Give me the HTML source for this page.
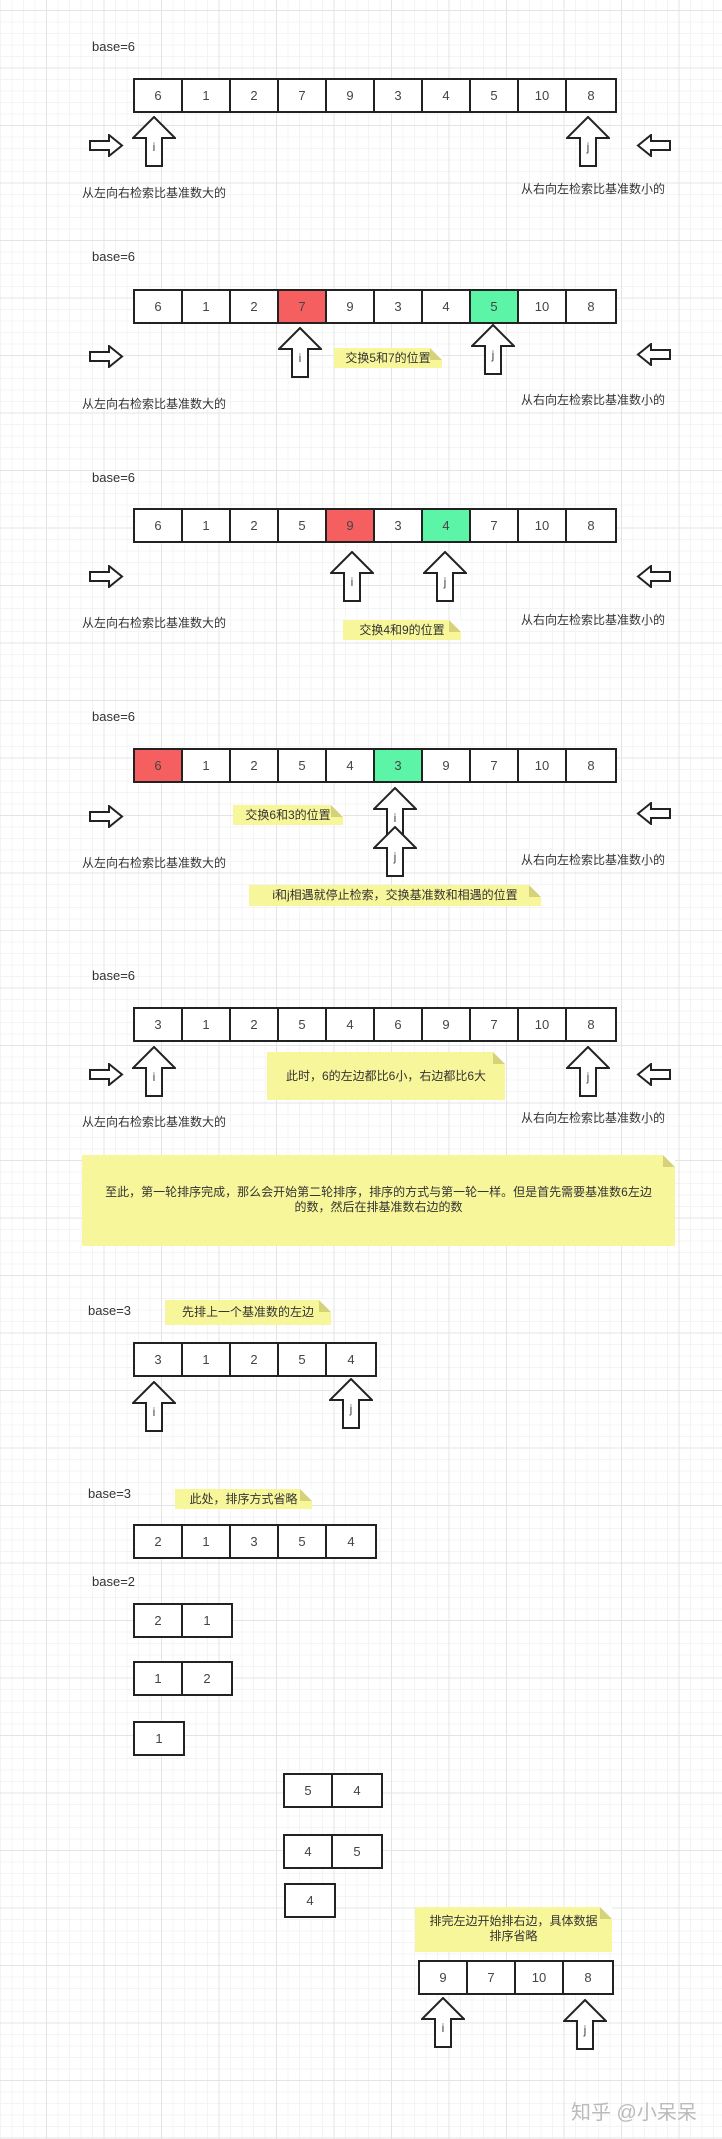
<!DOCTYPE html>
<html><head><meta charset="utf-8"><style>
*{margin:0;padding:0;box-sizing:border-box}
body{width:722px;height:2139px;position:relative;overflow:hidden;background-color:#fff;
background-image:
linear-gradient(to right,#e4e4e4 1px,transparent 1px),
linear-gradient(to bottom,#e4e4e4 1px,transparent 1px),
linear-gradient(to right,#f4f4f4 1px,transparent 1px),
linear-gradient(to bottom,#f4f4f4 1px,transparent 1px);
background-size:57.5px 57.5px,57.5px 57.5px,11.5px 11.5px,11.5px 11.5px;
background-position:46px 10px,46px 10px,46px 10px,46px 10px;
font-family:"Liberation Sans","Noto Sans CJK SC",sans-serif;color:#333}
.a{position:absolute}
.t{position:absolute;font-size:12px;color:#333;white-space:nowrap;line-height:14px}
.b{position:absolute;font-size:13px;color:#333;line-height:14px}
.arr{position:absolute;display:flex;border:2px solid #222;background:#fff}
.arr div{width:48px;height:31px;border-right:2px solid #222;text-align:center;line-height:31px;font-size:13px;color:#444}
.arr div:last-child{border-right:none}
.r{background:#f55f5f!important}.g{background:#5cf5a8!important}
.n{position:absolute;background:#f8f69a;font-size:12px;color:#333;text-align:center;line-height:15px}
.n:after{content:"";position:absolute;right:0;top:0;border-style:solid;border-width:0 12px 12px 0;border-color:#fff #fff #d5d27a #d5d27a}
.wm{position:absolute;font-size:20px;color:#bbb;left:571px;top:2096px}
</style></head><body>

<!-- S1 -->
<div class="b" style="left:92px;top:40px">base=6</div>
<div class="arr" style="left:133px;top:78px"><div>6</div><div>1</div><div>2</div><div>7</div><div>9</div><div>3</div><div>4</div><div>5</div><div>10</div><div>8</div></div>
<svg class="a" style="left:132px;top:116px" width="44" height="52"><path d="M22 1L43 22H30V50H14V22H1Z" fill="#fff" stroke="#222" stroke-width="2"/><text x="22" y="35" font-size="12" text-anchor="middle" fill="#444" font-family="Liberation Sans">i</text></svg>
<svg class="a" style="left:566px;top:116px" width="44" height="52"><path d="M22 1L43 22H30V50H14V22H1Z" fill="#fff" stroke="#222" stroke-width="2"/><text x="22" y="35" font-size="12" text-anchor="middle" fill="#444" font-family="Liberation Sans">j</text></svg>
<svg class="a" style="left:89px;top:134px" width="35" height="23"><path d="M1 7H20V1L33 11.5L20 22V16H1Z" fill="#fff" stroke="#222" stroke-width="2"/></svg>
<svg class="a" style="left:636px;top:134px" width="35" height="23"><path d="M34 7H15V1L2 11.5L15 22V16H34Z" fill="#fff" stroke="#222" stroke-width="2"/></svg>
<div class="t" style="left:82px;top:186px">从左向右检索比基准数大的</div>
<div class="t" style="left:521px;top:182px">从右向左检索比基准数小的</div>

<!-- S2 -->
<div class="b" style="left:92px;top:250px">base=6</div>
<div class="arr" style="left:133px;top:289px"><div>6</div><div>1</div><div>2</div><div class="r">7</div><div>9</div><div>3</div><div>4</div><div class="g">5</div><div>10</div><div>8</div></div>
<svg class="a" style="left:278px;top:327px" width="44" height="52"><path d="M22 1L43 22H30V50H14V22H1Z" fill="#fff" stroke="#222" stroke-width="2"/><text x="22" y="35" font-size="12" text-anchor="middle" fill="#444" font-family="Liberation Sans">i</text></svg>
<svg class="a" style="left:471px;top:324px" width="44" height="52"><path d="M22 1L43 22H30V50H14V22H1Z" fill="#fff" stroke="#222" stroke-width="2"/><text x="22" y="35" font-size="12" text-anchor="middle" fill="#444" font-family="Liberation Sans">j</text></svg>
<div class="n" style="left:334px;top:348px;width:108px;height:20px;line-height:20px">交换5和7的位置</div>
<svg class="a" style="left:89px;top:345px" width="35" height="23"><path d="M1 7H20V1L33 11.5L20 22V16H1Z" fill="#fff" stroke="#222" stroke-width="2"/></svg>
<svg class="a" style="left:636px;top:343px" width="35" height="23"><path d="M34 7H15V1L2 11.5L15 22V16H34Z" fill="#fff" stroke="#222" stroke-width="2"/></svg>
<div class="t" style="left:82px;top:397px">从左向右检索比基准数大的</div>
<div class="t" style="left:521px;top:393px">从右向左检索比基准数小的</div>

<!-- S3 -->
<div class="b" style="left:92px;top:471px">base=6</div>
<div class="arr" style="left:133px;top:508px"><div>6</div><div>1</div><div>2</div><div>5</div><div class="r">9</div><div>3</div><div class="g">4</div><div>7</div><div>10</div><div>8</div></div>
<svg class="a" style="left:330px;top:551px" width="44" height="52"><path d="M22 1L43 22H30V50H14V22H1Z" fill="#fff" stroke="#222" stroke-width="2"/><text x="22" y="35" font-size="12" text-anchor="middle" fill="#444" font-family="Liberation Sans">i</text></svg>
<svg class="a" style="left:423px;top:551px" width="44" height="52"><path d="M22 1L43 22H30V50H14V22H1Z" fill="#fff" stroke="#222" stroke-width="2"/><text x="22" y="35" font-size="12" text-anchor="middle" fill="#444" font-family="Liberation Sans">j</text></svg>
<svg class="a" style="left:89px;top:565px" width="35" height="23"><path d="M1 7H20V1L33 11.5L20 22V16H1Z" fill="#fff" stroke="#222" stroke-width="2"/></svg>
<svg class="a" style="left:636px;top:565px" width="35" height="23"><path d="M34 7H15V1L2 11.5L15 22V16H34Z" fill="#fff" stroke="#222" stroke-width="2"/></svg>
<div class="n" style="left:343px;top:620px;width:118px;height:20px;line-height:20px">交换4和9的位置</div>
<div class="t" style="left:82px;top:616px">从左向右检索比基准数大的</div>
<div class="t" style="left:521px;top:613px">从右向左检索比基准数小的</div>

<!-- S4 -->
<div class="b" style="left:92px;top:710px">base=6</div>
<div class="arr" style="left:133px;top:748px"><div class="r">6</div><div>1</div><div>2</div><div>5</div><div>4</div><div class="g">3</div><div>9</div><div>7</div><div>10</div><div>8</div></div>
<svg class="a" style="left:373px;top:787px" width="44" height="52"><path d="M22 1L43 22H30V50H14V22H1Z" fill="#fff" stroke="#222" stroke-width="2"/><text x="22" y="35" font-size="12" text-anchor="middle" fill="#444" font-family="Liberation Sans">i</text></svg>
<svg class="a" style="left:373px;top:826px" width="44" height="52"><path d="M22 1L43 22H30V50H14V22H1Z" fill="#fff" stroke="#222" stroke-width="2"/><text x="22" y="35" font-size="12" text-anchor="middle" fill="#444" font-family="Liberation Sans">j</text></svg>
<div class="n" style="left:233px;top:805px;width:110px;height:20px;line-height:20px">交换6和3的位置</div>
<svg class="a" style="left:89px;top:805px" width="35" height="23"><path d="M1 7H20V1L33 11.5L20 22V16H1Z" fill="#fff" stroke="#222" stroke-width="2"/></svg>
<svg class="a" style="left:636px;top:802px" width="35" height="23"><path d="M34 7H15V1L2 11.5L15 22V16H34Z" fill="#fff" stroke="#222" stroke-width="2"/></svg>
<div class="t" style="left:82px;top:856px">从左向右检索比基准数大的</div>
<div class="t" style="left:521px;top:853px">从右向左检索比基准数小的</div>
<div class="n" style="left:249px;top:885px;width:292px;height:21px;line-height:21px">i和j相遇就停止检索，交换基准数和相遇的位置</div>

<!-- S5 -->
<div class="b" style="left:92px;top:969px">base=6</div>
<div class="arr" style="left:133px;top:1007px"><div>3</div><div>1</div><div>2</div><div>5</div><div>4</div><div>6</div><div>9</div><div>7</div><div>10</div><div>8</div></div>
<svg class="a" style="left:132px;top:1046px" width="44" height="52"><path d="M22 1L43 22H30V50H14V22H1Z" fill="#fff" stroke="#222" stroke-width="2"/><text x="22" y="35" font-size="12" text-anchor="middle" fill="#444" font-family="Liberation Sans">i</text></svg>
<svg class="a" style="left:566px;top:1046px" width="44" height="52"><path d="M22 1L43 22H30V50H14V22H1Z" fill="#fff" stroke="#222" stroke-width="2"/><text x="22" y="35" font-size="12" text-anchor="middle" fill="#444" font-family="Liberation Sans">j</text></svg>
<div class="n" style="left:267px;top:1052px;width:238px;height:48px;line-height:48px">此时，6的左边都比6小，右边都比6大</div>
<svg class="a" style="left:89px;top:1063px" width="35" height="23"><path d="M1 7H20V1L33 11.5L20 22V16H1Z" fill="#fff" stroke="#222" stroke-width="2"/></svg>
<svg class="a" style="left:636px;top:1063px" width="35" height="23"><path d="M34 7H15V1L2 11.5L15 22V16H34Z" fill="#fff" stroke="#222" stroke-width="2"/></svg>
<div class="t" style="left:82px;top:1115px">从左向右检索比基准数大的</div>
<div class="t" style="left:521px;top:1111px">从右向左检索比基准数小的</div>

<!-- big note -->
<div class="n" style="left:82px;top:1155px;width:593px;height:91px;padding-top:30px">至此，第一轮排序完成，那么会开始第二轮排序，排序的方式与第一轮一样。但是首先需要基准数6左边<br>的数，然后在排基准数右边的数</div>

<!-- base=3 -->
<div class="b" style="left:88px;top:1304px">base=3</div>
<div class="n" style="left:165px;top:1300px;width:166px;height:25px;line-height:25px">先排上一个基准数的左边</div>
<div class="arr" style="left:133px;top:1342px"><div>3</div><div>1</div><div>2</div><div>5</div><div>4</div></div>
<svg class="a" style="left:132px;top:1381px" width="44" height="52"><path d="M22 1L43 22H30V50H14V22H1Z" fill="#fff" stroke="#222" stroke-width="2"/><text x="22" y="35" font-size="12" text-anchor="middle" fill="#444" font-family="Liberation Sans">i</text></svg>
<svg class="a" style="left:329px;top:1378px" width="44" height="52"><path d="M22 1L43 22H30V50H14V22H1Z" fill="#fff" stroke="#222" stroke-width="2"/><text x="22" y="35" font-size="12" text-anchor="middle" fill="#444" font-family="Liberation Sans">j</text></svg>

<div class="b" style="left:88px;top:1487px">base=3</div>
<div class="n" style="left:175px;top:1489px;width:137px;height:20px;line-height:20px">此处，排序方式省略</div>
<div class="arr" style="left:133px;top:1524px"><div>2</div><div>1</div><div>3</div><div>5</div><div>4</div></div>

<div class="b" style="left:92px;top:1575px">base=2</div>
<div class="arr" style="left:133px;top:1603px"><div>2</div><div>1</div></div>
<div class="arr" style="left:133px;top:1661px"><div>1</div><div>2</div></div>
<div class="arr" style="left:133px;top:1721px"><div>1</div></div>
<div class="arr" style="left:283px;top:1773px"><div>5</div><div>4</div></div>
<div class="arr" style="left:283px;top:1834px"><div>4</div><div>5</div></div>
<div class="arr" style="left:284px;top:1883px"><div>4</div></div>

<div class="n" style="left:415px;top:1907px;width:197px;height:45px;padding-top:7px">排完左边开始排右边，具体数据<br>排序省略</div>
<div class="arr" style="left:418px;top:1960px"><div>9</div><div>7</div><div>10</div><div>8</div></div>
<svg class="a" style="left:421px;top:1997px" width="44" height="52"><path d="M22 1L43 22H30V50H14V22H1Z" fill="#fff" stroke="#222" stroke-width="2"/><text x="22" y="35" font-size="12" text-anchor="middle" fill="#444" font-family="Liberation Sans">i</text></svg>
<svg class="a" style="left:563px;top:1999px" width="44" height="52"><path d="M22 1L43 22H30V50H14V22H1Z" fill="#fff" stroke="#222" stroke-width="2"/><text x="22" y="35" font-size="12" text-anchor="middle" fill="#444" font-family="Liberation Sans">j</text></svg>

<div class="wm">知乎 @小呆呆</div>
</body></html>
